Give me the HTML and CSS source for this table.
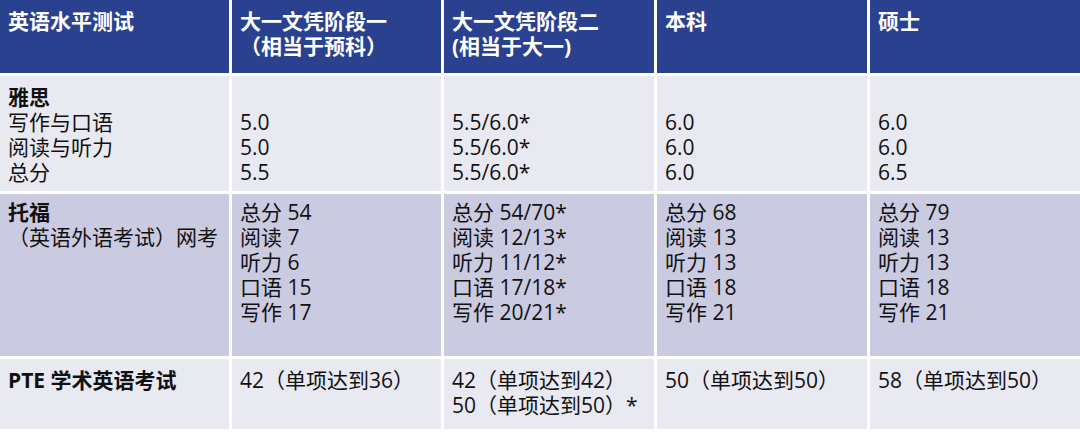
FILE: index.html
```html
<!DOCTYPE html>
<html lang="zh-CN">
<head>
<meta charset="utf-8">
<link rel="stylesheet" href="styles.css">
</head>
<body>
<div class="table">
  <div class="cell head"><div class="ln">英语水平测试</div></div>
  <div class="cell head"><div class="ln">大一文凭阶段一</div><div class="ln">（相当于预科）</div></div>
  <div class="cell head"><div class="ln">大一文凭阶段二</div><div class="ln">(相当于大一)</div></div>
  <div class="cell head"><div class="ln">本科</div></div>
  <div class="cell head"><div class="ln">硕士</div></div>

  <div class="cell light"><div class="ln"><b>雅思</b></div><div class="ln">写作与口语</div><div class="ln">阅读与听力</div><div class="ln">总分</div></div>
  <div class="cell light"><div class="ln"></div><div class="ln">5.0</div><div class="ln">5.0</div><div class="ln">5.5</div></div>
  <div class="cell light"><div class="ln"></div><div class="ln">5.5/6.0*</div><div class="ln">5.5/6.0*</div><div class="ln">5.5/6.0*</div></div>
  <div class="cell light"><div class="ln"></div><div class="ln">6.0</div><div class="ln">6.0</div><div class="ln">6.0</div></div>
  <div class="cell light"><div class="ln"></div><div class="ln">6.0</div><div class="ln">6.0</div><div class="ln">6.5</div></div>

  <div class="cell mid"><div class="ln"><b>托福</b></div><div class="ln">（英语外语考试）网考</div></div>
  <div class="cell mid"><div class="ln">总分 54</div><div class="ln">阅读 7</div><div class="ln">听力 6</div><div class="ln">口语 15</div><div class="ln">写作 17</div></div>
  <div class="cell mid"><div class="ln">总分 54/70*</div><div class="ln">阅读 12/13*</div><div class="ln">听力 11/12*</div><div class="ln">口语 17/18*</div><div class="ln">写作 20/21*</div></div>
  <div class="cell mid"><div class="ln">总分 68</div><div class="ln">阅读 13</div><div class="ln">听力 13</div><div class="ln">口语 18</div><div class="ln">写作 21</div></div>
  <div class="cell mid"><div class="ln">总分 79</div><div class="ln">阅读 13</div><div class="ln">听力 13</div><div class="ln">口语 18</div><div class="ln">写作 21</div></div>

  <div class="cell light"><div class="ln"><b>PTE 学术英语考试</b></div></div>
  <div class="cell light"><div class="ln">42（单项达到36）</div></div>
  <div class="cell light"><div class="ln">42（单项达到42）</div><div class="ln">50（单项达到50）*</div></div>
  <div class="cell light"><div class="ln">50（单项达到50）</div></div>
  <div class="cell light"><div class="ln">58（单项达到50）</div></div>
</div>
</body>
</html>
```
FILE: styles.css
```css
html, body {
  margin: 0;
  padding: 0;
  background: #ffffff;
}
body {
  width: 1080px;
  height: 432px;
  overflow: hidden;
  font-family: "Open Sans", "Noto Sans CJK SC", sans-serif;
  font-size: 21px;
  line-height: 25px;
  color: #111111;
}
.table {
  display: grid;
  grid-template-columns: 229px 209px 210px 210px 210px;
  grid-template-rows: 73px 115px 162px 70px;
  gap: 3px;
}
.cell {
  padding: 9px 8px;
  white-space: nowrap;
  overflow: hidden;
  text-spacing-trim: space-all;
}
.ln {
  height: 25px;
  line-height: 25px;
}
.head {
  background: #2a4190;
  color: #ffffff;
  font-weight: bold;
}
.light {
  background: #e9e9f2;
}
.mid {
  background: #cacae1;
  padding-top: 6px;
}
b {
  font-weight: bold;
}
```
